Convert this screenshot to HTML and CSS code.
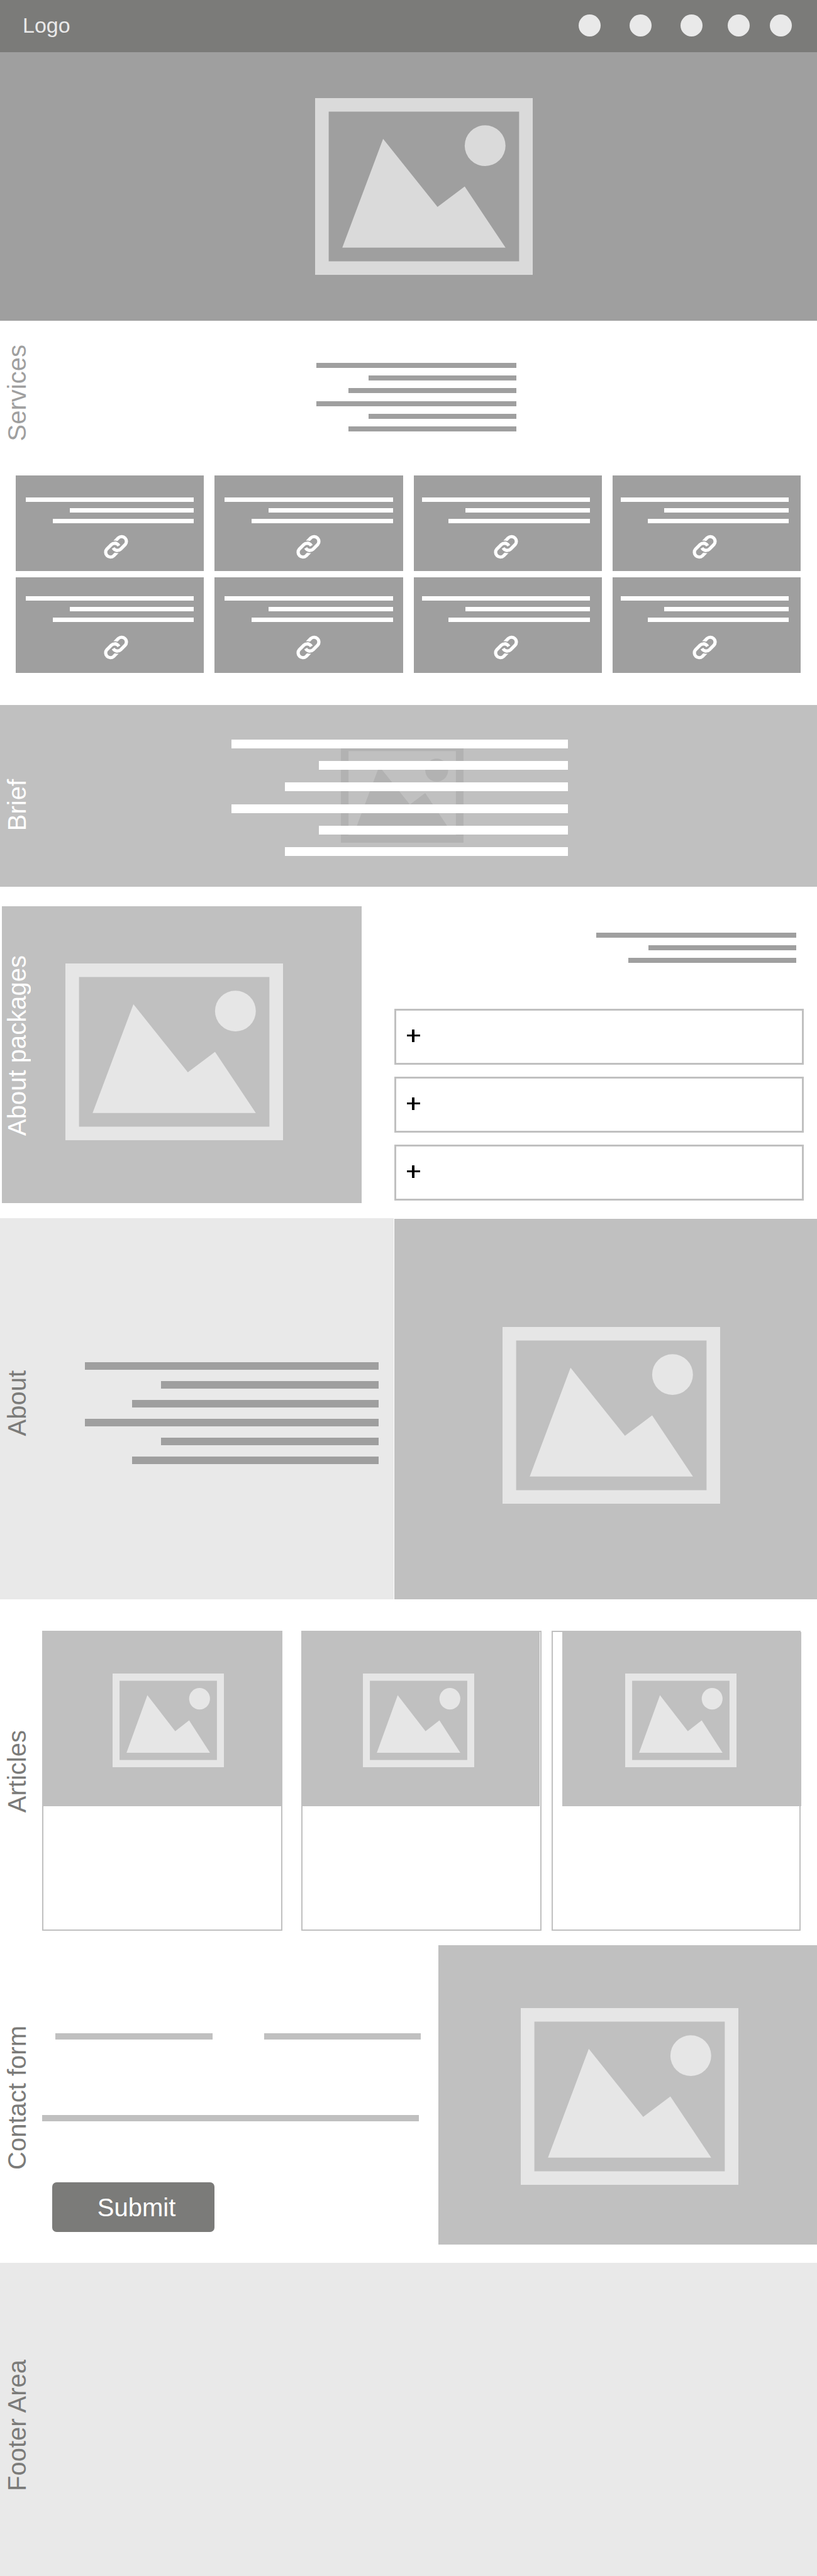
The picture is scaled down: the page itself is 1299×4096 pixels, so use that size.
FILE: index.html
```html
<!DOCTYPE html>
<html lang="en">
<head>
<meta charset="utf-8">
<meta name="viewport" content="width=device-width, initial-scale=1">
<title>Home</title>
<link rel="stylesheet" href="styles.css">
</head>
<body>
<svg class="sprite" aria-hidden="true">
  <symbol id="picture" viewBox="0 0 16 13" preserveAspectRatio="none">
    <path fill-rule="evenodd" d="M0 0H16V13H0ZM1 1V12H15V1Z"/>
    <path d="M2 11L5 3L9 8L11 6.5L14 11Z"/>
    <circle cx="12.5" cy="3.5" r="1.5"/>
  </symbol>
  <symbol id="link" viewBox="-87 -87 174 174">
    <g fill="none" stroke="#fff" stroke-width="23">
      <path d="M-10 -37L17 -64A34 34 0 0 1 65 -16L33 16A34 34 0 0 1 -20 8"/>
      <path d="M10 37L-17 64A34 34 0 0 1 -65 16L-33 -16A34 34 0 0 1 20 -8"/>
    </g>
    <g fill="none" stroke="#9f9f9f" stroke-width="7">
      <path d="M-19 -40A49 49 0 0 1 16 -34"/>
      <path d="M19 40A49 49 0 0 1 -16 34"/>
    </g>
  </symbol>
  <symbol id="plus" viewBox="0 0 21 20">
    <path d="M8 0H12V8H21V11H12V20H8V11H0V8H8Z"/>
  </symbol>
</svg>

<header class="site-header">
  <a class="logo" href="#top">Logo</a>
  <nav class="site-nav" aria-label="Main">
    <a href="#services" aria-label="Services"></a>
    <a href="#packages" aria-label="Packages"></a>
    <a href="#about" aria-label="About"></a>
    <a href="#articles" aria-label="Articles"></a>
    <a href="#contact" aria-label="Contact"></a>
  </nav>
</header>

<main>
  <section class="hero">
    <svg class="picture"><use href="#picture"/></svg>
  </section>

  <section class="services" id="services">
    <div class="services-intro">
      <h2 class="label">Services</h2>
      <div class="services-text">
        <div class="lines"><i></i><i></i><i></i><i></i><i></i><i></i></div>
      </div>
    </div>
    <div class="service-grid">
      <a class="service" href="#s1"><span class="lines"><i></i><i></i><i></i></span><svg class="link-icon"><use href="#link"/></svg></a>
      <a class="service" href="#s2"><span class="lines"><i></i><i></i><i></i></span><svg class="link-icon"><use href="#link"/></svg></a>
      <a class="service" href="#s3"><span class="lines"><i></i><i></i><i></i></span><svg class="link-icon"><use href="#link"/></svg></a>
      <a class="service" href="#s4"><span class="lines"><i></i><i></i><i></i></span><svg class="link-icon"><use href="#link"/></svg></a>
      <a class="service" href="#s5"><span class="lines"><i></i><i></i><i></i></span><svg class="link-icon"><use href="#link"/></svg></a>
      <a class="service" href="#s6"><span class="lines"><i></i><i></i><i></i></span><svg class="link-icon"><use href="#link"/></svg></a>
      <a class="service" href="#s7"><span class="lines"><i></i><i></i><i></i></span><svg class="link-icon"><use href="#link"/></svg></a>
      <a class="service" href="#s8"><span class="lines"><i></i><i></i><i></i></span><svg class="link-icon"><use href="#link"/></svg></a>
    </div>
  </section>

  <section class="brief">
    <h2 class="label">Brief</h2>
    <div class="brief-body">
      <svg class="picture"><use href="#picture"/></svg>
      <div class="lines"><i></i><i></i><i></i><i></i><i></i><i></i></div>
    </div>
  </section>

  <section class="packages" id="packages">
    <div class="packages-panel">
      <h2 class="label">About packages</h2>
      <svg class="picture"><use href="#picture"/></svg>
    </div>
    <div class="packages-body">
      <div class="lines"><i></i><i></i><i></i></div>
      <div class="accordion">
        <button type="button" aria-label="Expand package 1"><svg class="plus"><use href="#plus"/></svg></button>
        <button type="button" aria-label="Expand package 2"><svg class="plus"><use href="#plus"/></svg></button>
        <button type="button" aria-label="Expand package 3"><svg class="plus"><use href="#plus"/></svg></button>
      </div>
    </div>
  </section>

  <section class="about" id="about">
    <div class="about-text">
      <h2 class="label">About</h2>
      <div class="lines"><i></i><i></i><i></i><i></i><i></i><i></i></div>
    </div>
    <div class="about-media">
      <svg class="picture"><use href="#picture"/></svg>
    </div>
  </section>

  <section class="articles" id="articles">
    <h2 class="label">Articles</h2>
    <div class="article-list">
      <article class="card"><div class="card-media"><svg class="picture"><use href="#picture"/></svg></div></article>
      <article class="card"><div class="card-media"><svg class="picture"><use href="#picture"/></svg></div></article>
      <article class="card"><div class="card-media"><svg class="picture"><use href="#picture"/></svg></div></article>
    </div>
  </section>

  <section class="contact" id="contact">
    <div class="contact-main">
      <h2 class="label">Contact form</h2>
      <form class="contact-form">
        <div class="field-row">
          <input type="text" name="name" aria-label="Name">
          <input type="email" name="email" aria-label="Email">
        </div>
        <div class="field-wide">
          <input type="text" name="message" aria-label="Message">
        </div>
        <button type="submit">Submit</button>
      </form>
    </div>
    <div class="contact-media">
      <svg class="picture"><use href="#picture"/></svg>
    </div>
  </section>
</main>

<footer class="site-footer">
  <h2 class="label">Footer Area</h2>
</footer>
</body>
</html>
```

FILE: styles.css
```css
:root {
  --dark: #7b7b79;
  --mid: #9f9f9f;
  --soft: #c0c0c0;
  --pale: #e9e9e9;
  --picture: #e6e6e6;
}

* {
  box-sizing: border-box;
}

body {
  margin: 0;
  background: #fff;
  font-family: "Liberation Sans", Arial, Helvetica, sans-serif;
}

.sprite {
  display: none;
}

svg {
  display: block;
  flex: none;
}

/* Section titles run up the left edge */
.label {
  flex: none;
  align-self: flex-start;
  width: 48px;
  margin: 0 0 0 3px;
  font-size: 40px;
  font-weight: 400;
  line-height: 48px;
  white-space: nowrap;
  writing-mode: vertical-rl;
  transform: rotate(180deg);
  color: var(--dark);
}

.picture {
  width: 346px;
  height: 281px;
  fill: var(--picture);
}

/* Right-aligned text bars */
.lines {
  display: flex;
  flex-direction: column;
  align-items: flex-end;
  gap: 12px;
  color: var(--mid);
}

.lines i {
  width: 100%;
  height: 8px;
  background: currentColor;
}

.lines i:nth-child(3n + 2) {
  width: 74%;
}

.lines i:nth-child(3n) {
  width: 84%;
}

/* Header */
.site-header {
  display: flex;
  align-items: center;
  justify-content: space-between;
  height: 83px;
  padding: 0 40px 3px 36px;
  background: var(--dark);
}

.logo {
  font-size: 34px;
  line-height: 40px;
  color: var(--pale);
  text-decoration: none;
}

.site-nav {
  display: flex;
}

.site-nav a {
  width: 35px;
  height: 35px;
  margin-left: 46px;
  border-radius: 50%;
  background: var(--pale);
}

.site-nav a:nth-child(4) {
  margin-left: 40px;
}

.site-nav a:nth-child(5) {
  margin-left: 32px;
}

/* Hero */
.hero {
  display: flex;
  justify-content: center;
  padding: 73px 0 73px 48px;
  background: var(--mid);
}

.hero .picture {
  fill: #dadada;
}

/* Services */
.services {
  padding: 38px 26px 51px 0;
}

.services-intro {
  display: flex;
  align-items: flex-start;
  min-height: 208px;
}

.services .label {
  color: var(--mid);
}

.services-text {
  display: flex;
  flex: 1;
  justify-content: center;
  padding-top: 29px;
}

.services-text .lines {
  width: 318px;
}

.service-grid {
  display: grid;
  grid-template-columns: repeat(4, 1fr);
  gap: 10px 17px;
  padding-left: 25px;
}

.service {
  display: flex;
  flex-direction: column;
  align-items: center;
  justify-content: space-between;
  height: 152px;
  padding: 35px 16px 19px;
  background: var(--mid);
}

.service:nth-child(n + 5) {
  padding-top: 30px;
  padding-bottom: 21px;
}

.service:nth-child(4n + 3),
.service:nth-child(4n) {
  padding-left: 13px;
  padding-right: 19px;
}

.service .lines {
  width: 100%;
  gap: 10px;
  color: #fff;
}

.service .lines i {
  height: 7px;
}

.link-icon {
  width: 39px;
  height: 39px;
}

.service:nth-child(4n + 1) .link-icon {
  margin-left: 20px;
}

/* Brief */
.brief {
  display: flex;
  height: 289px;
  background: var(--soft);
}

.brief .label {
  margin-top: 118px;
  color: #fff;
}

.brief-body {
  display: grid;
  flex: 1;
  justify-content: center;
  align-content: start;
  padding: 55px 80px 0 0;
}

.brief-body > * {
  grid-area: 1 / 1;
}

.brief .picture {
  justify-self: center;
  width: 195px;
  height: 158px;
  margin: 6px 0 0 8px;
  fill: #b2b2b2;
}

.brief .lines {
  width: 535px;
  gap: 20px;
  color: #fff;
}

.brief .lines i {
  height: 14px;
}

.lines i:nth-child(4) {
  margin-top: 1px;
}

/* Packages */
.packages {
  display: grid;
  grid-template-columns: 572fr 651fr;
  gap: 52px;
  padding: 31px 21px 24px 3px;
}

.packages-panel {
  display: flex;
  background: var(--soft);
}

.packages-panel .label {
  margin: 78px 0 0;
  color: #fff;
}

.packages-panel .picture {
  margin: 91px 0 0 53px;
}

.packages-body {
  padding: 42px 0 4px;
}

.packages-body .lines {
  width: 318px;
  margin: 0 12px 73px auto;
}

.accordion {
  display: grid;
  gap: 19px;
}

.accordion button {
  display: flex;
  align-items: center;
  height: 89px;
  padding: 0 17px 4px;
  border: 3px solid var(--soft);
  background: #fff;
}

.plus {
  width: 21px;
  height: 20px;
  fill: #000;
}

/* About */
.about {
  display: grid;
  grid-template-columns: 626fr 672fr;
  gap: 1px;
}

.about-text {
  display: flex;
  align-items: flex-start;
  justify-content: space-between;
  padding: 229px 24px 0 0;
  background: var(--pale);
}

.about-text .label {
  margin-top: 13px;
}

.about-text .lines {
  width: 467px;
  gap: 18px;
}

.about-text .lines i {
  height: 12px;
  margin-top: 0;
}

.about-media {
  display: flex;
  justify-content: center;
  margin-top: 1px;
  padding: 172px 0 152px 18px;
  background: var(--soft);
}

/* Articles */
.articles {
  display: flex;
  padding: 50px 26px 23px 0;
}

.articles .label {
  margin-top: 158px;
}

.article-list {
  display: flex;
  flex: 1;
  padding-left: 16px;
}

.card {
  flex: 382 1 0;
  height: 477px;
  border: 2px solid var(--soft);
}

.card:nth-child(2) {
  margin-left: 30px;
}

.card:nth-child(3) {
  flex-grow: 396;
  margin-left: 16px;
}

.card-media {
  display: flex;
  justify-content: center;
  padding: 66px 0 62px;
  background: var(--soft);
}

.card:nth-child(1) .card-media {
  padding-left: 18px;
}

.card:nth-child(2) .card-media {
  margin: 0 1px 0 -2px;
  padding-right: 6px;
}

.card:nth-child(3) .card-media {
  margin: 0 -3px 0 15px;
  padding-right: 4px;
}

.card .picture {
  width: 177px;
  height: 149px;
}

/* Contact */
.contact {
  display: grid;
  grid-template-columns: 697fr 602fr;
  padding-bottom: 29px;
}

.contact-main {
  display: flex;
  padding-right: 28px;
}

.contact-main .label {
  margin-top: 128px;
}

.contact-form {
  flex: 1;
  padding: 90px 0 0 16px;
}

.contact-form input {
  display: block;
  width: 100%;
  min-width: 0;
  height: 60px;
  padding: 0;
  border: 0;
  border-bottom: 10px solid var(--soft);
  border-radius: 0;
  background: none;
  font: inherit;
}

.field-row {
  display: grid;
  grid-template-columns: 1fr 1fr;
  gap: 82px;
  margin-bottom: 70px;
  padding-left: 21px;
}

.field-wide {
  padding-right: 3px;
}

.contact-form button {
  width: 258px;
  height: 79px;
  margin: 97px 0 0 16px;
  padding: 0 0 0 10px;
  border: 0;
  border-radius: 7px;
  background: var(--dark);
  font: 40px/48px "Liberation Sans", Arial, Helvetica, sans-serif;
  color: #fff;
}

.contact-media {
  display: flex;
  justify-content: center;
  padding: 100px 0 95px 6px;
  background: var(--soft);
}

/* Footer */
.site-footer {
  display: flex;
  min-height: 498px;
  background: var(--pale);
}

.site-footer .label {
  margin-top: 154px;
}
```
